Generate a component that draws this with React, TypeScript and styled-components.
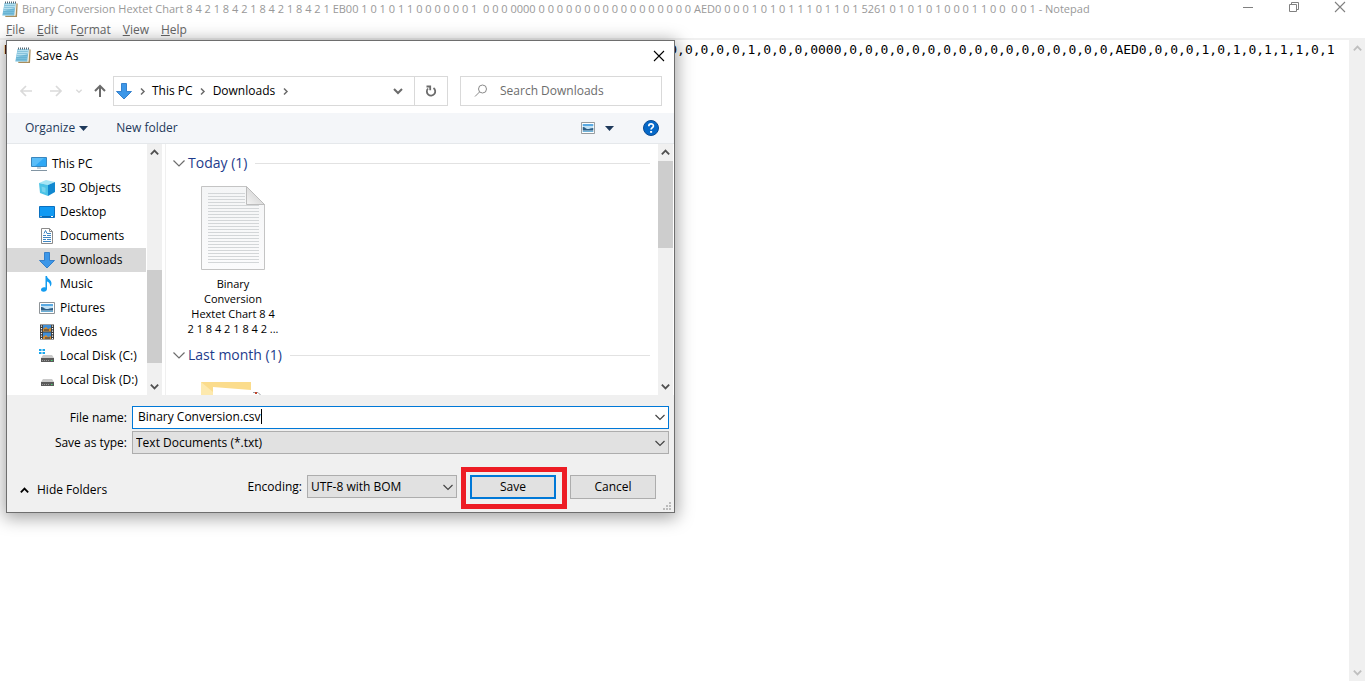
import React from "react";
import styled, { createGlobalStyle, css } from "styled-components";

const Global = createGlobalStyle`
  *, *::before, *::after { box-sizing: border-box; }
  body {
    margin: 0;
    background: #fff;
    color: #000;
    font: 12px/16px "Open Sans", "Noto Sans", sans-serif;
    overflow: hidden;
  }
  button, input, select, textarea { font: inherit; color: inherit; margin: 0; }
  svg { display: block; flex: none; }
`;

/* ---------- Notepad window ---------- */

const NotepadWindow = styled.main`
  position: relative;
  display: flex;
  flex-direction: column;
  height: 100vh;
  background: #fff;
`;

const TitleBar = styled.header`
  display: flex;
  align-items: center;
  height: 20px;
  padding: 0 13px 2px 2px;
  color: #999;
`;

const WindowTitle = styled.h1`
  flex: 1;
  margin: 0 0 0 4px;
  font-size: 11px;
  font-weight: 400;
  line-height: 16px;
  white-space: pre;
  overflow: hidden;
`;

const WindowControls = styled.div`
  display: flex;
  gap: 22px;
  height: 18px;
`;

const PlainButton = styled.button`
  display: flex;
  align-items: center;
  justify-content: center;
  padding: 0;
  border: 0;
  background: none;
`;

const CaptionButton = styled(PlainButton)`
  width: 24px;
  height: 14px;
  color: #808080;
`;

const MenuBar = styled.nav`
  display: flex;
  gap: 12px;
  height: 20px;
  padding: 0 6px;
  color: #666;
  border-bottom: 2px solid #f0f0f0;
`;

const MenuButton = styled(PlainButton)`
  height: 19px;
`;

const EditorRow = styled.section`
  display: flex;
  flex: 1;
  min-height: 0;
`;

const Editor = styled.textarea`
  flex: 1;
  min-width: 0;
  padding: 1px 0 0 4px;
  border: 0;
  outline: 0;
  resize: none;
  overflow: hidden;
  background: #fff;
  white-space: pre;
  font: 13px/18px "DejaVu Sans Mono", monospace;
`;

/* ---------- Scroll bars ---------- */

const Track = styled.div<{ $width: number }>`
  display: flex;
  flex-direction: column;
  flex: none;
  width: ${(p) => p.$width}px;
  background: #f0f0f0;
`;

const ScrollArrow = styled(PlainButton)<{ $dim?: boolean }>`
  height: 17px;
  flex: none;
  color: ${(p) => (p.$dim ? "#bfbfbf" : "#505050")};
`;

const Thumb = styled.div<{ $before: number; $size: number }>`
  flex: none;
  height: ${(p) => p.$size}px;
  margin-top: ${(p) => p.$before}px;
  background: #cdcdcd;
`;

const Spacer = styled.div`
  flex: 1;
`;

/* ---------- Save As dialog ---------- */

const Dialog = styled.section`
  position: absolute;
  left: 6px;
  top: 40px;
  width: 669px;
  display: flex;
  flex-direction: column;
  border: 1px solid #6e6e6e;
  background: #fff;
  box-shadow: 0 3px 16px 2px rgba(0, 0, 0, 0.36);
`;

const DialogTitleBar = styled.header`
  display: flex;
  align-items: center;
  height: 29px;
  padding: 0 9px 0 8px;
`;

const DialogTitle = styled.h2`
  flex: 1;
  margin: 0 0 0 5px;
  font-size: 12px;
  font-weight: 400;
`;

const NavRow = styled.div`
  display: flex;
  align-items: center;
  padding: 6px 12px 7px 5px;
  height: 43px;
`;

const NavButton = styled(PlainButton)<{ $width: number; $dim?: boolean }>`
  width: ${(p) => p.$width}px;
  height: 20px;
  color: ${(p) => (p.$dim ? "#dadada" : "#6b6b6b")};
`;

const AddressBar = styled.div`
  display: flex;
  align-items: center;
  flex: 1;
  height: 30px;
  padding-left: 2px;
  border: 1px solid #d9d9d9;
  color: #6b6b6b;
`;

const Crumb = styled(PlainButton)`
  color: #000;
`;

const CrumbArrow = styled.span`
  display: flex;
  justify-content: center;
  width: 20px;
`;

const Refresh = styled(PlainButton)`
  align-self: stretch;
  width: 33px;
  border-left: 1px solid #d9d9d9;
  color: #6b6b6b;
`;

const SearchBox = styled.label`
  display: flex;
  align-items: center;
  flex: none;
  width: 202px;
  height: 30px;
  margin-left: 12px;
  padding-left: 13px;
  gap: 12px;
  border: 1px solid #d9d9d9;
`;

const SearchInput = styled.input`
  min-width: 0;
  flex: 1;
  padding: 0;
  border: 0;
  outline: 0;
  background: none;
  &::placeholder { color: #6d6d6d; opacity: 1; }
`;

const Toolbar = styled.div`
  display: flex;
  align-items: center;
  height: 31px;
  padding: 0 15px 0 18px;
  border-bottom: 1px solid #e5e8eb;
  background: #f4f6f9;
  color: #1e395b;
`;

const ToolButton = styled(PlainButton)`
  gap: 4px;
  margin-right: 28px;
`;

const ViewButton = styled(PlainButton)`
  gap: 10px;
  margin-right: 29px;
`;

const Browser = styled.div`
  display: flex;
  height: 251px;
  padding-right: 1px;
`;

const Tree = styled.ul`
  flex: none;
  width: 140px;
  margin: 0;
  padding: 8px 1px 0 0;
  list-style: none;
  overflow: hidden;
`;

const TreeItem = styled.li<{ $depth: number; $selected?: boolean }>`
  display: flex;
  align-items: center;
  gap: 5px;
  height: 24px;
  padding-left: ${(p) => 24 + p.$depth * 8}px;
  white-space: nowrap;
  ${(p) => p.$selected && css`background: #d9d9d9;`}
`;

const Files = styled.div`
  flex: 1;
  margin-left: 3px;
  padding: 9px 8px 0 7px;
  border-left: 1px solid #f0f0f0;
  overflow: hidden;
`;

const GroupHeader = styled.h3`
  display: flex;
  align-items: center;
  gap: 3px;
  margin: 0;
  color: #1e3c8c;
  font-size: 14px;
  font-weight: 400;
  line-height: 20px;
  &::after {
    content: "";
    flex: 1;
    height: 1px;
    margin-left: 5px;
    background: #e2e2e2;
  }
`;

const FileTile = styled.figure`
  display: flex;
  flex-direction: column;
  align-items: center;
  gap: 6px;
  width: 94px;
  height: 172px;
  margin: 0 0 0 13px;
  padding-top: 13px;
`;

const FileName = styled.figcaption`
  font-size: 11px;
  line-height: 15px;
  text-align: center;
  white-space: pre;
`;

const FolderTile = styled.div`
  padding: 17px 0 0 28px;
`;

const Form = styled.form`
  display: flex;
  flex-direction: column;
  padding: 11px 5px 0 0;
  height: 117px;
  background: #f0f0f0;
`;

const Field = styled.div`
  display: flex;
  align-items: center;
  margin-bottom: 2px;
`;

const FieldLabel = styled.label`
  width: 125px;
  padding-right: 5px;
  text-align: right;
`;

const NameBox = styled.div`
  display: flex;
  align-items: center;
  flex: 1;
  height: 23px;
  padding: 0 2px 2px 5px;
  border: 1px solid #0078d7;
  background: #fff;
`;

const NameInput = styled.input`
  field-sizing: content;
  padding: 0;
  border: 0;
  outline: 0;
  background: none;
`;

const Caret = styled.span`
  width: 1px;
  height: 15px;
  background: #000;
`;

const SelectBox = styled.div<{ $width?: number }>`
  display: grid;
  align-items: center;
  height: 23px;
  ${(p) => (p.$width ? css`width: ${p.$width}px;` : css`flex: 1;`)}
  & > * { grid-area: 1 / 1; }
  & > svg { justify-self: end; margin-right: 3px; pointer-events: none; }
`;

const Select = styled.select`
  width: 100%;
  height: 23px;
  padding: 0 20px 0 3px;
  border: 1px solid #adadad;
  border-radius: 0;
  background: #e1e1e1;
  appearance: none;
`;

const Actions = styled.div`
  display: flex;
  align-items: flex-start;
  padding: 19px 13px 0 12px;
`;

const HideFolders = styled(PlainButton)`
  gap: 7px;
  margin: 7px auto 0 0;
`;

const EncodingLabel = styled.label`
  margin: 4px 5px 0 0;
`;

const SaveHighlight = styled.span`
  position: relative;
  margin: 0 14px 0 13px;
  &::after {
    content: "";
    position: absolute;
    inset: -8px -11px -10px -9px;
    border: 5px solid #ed1c24;
    pointer-events: none;
  }
`;

const PushButton = styled.button<{ $primary?: boolean }>`
  display: block;
  width: 86px;
  height: 24px;
  padding: 0;
  border: ${(p) => (p.$primary ? "2px solid #0078d7" : "1px solid #adadad")};
  background: #e1e1e1;
`;

const Grip = styled.span`
  position: absolute;
  right: 2px;
  bottom: 1px;
`;

/* ---------- Icons ---------- */

type Dir = "up" | "down" | "left" | "right";
const chevrons: Record<Dir, string> = {
  up: "M2 8 6 4l4 4",
  down: "M2 4l4 4 4-4",
  left: "M8 2 4 6l4 4",
  right: "M4 2l4 4-4 4",
};

const Chevron = ({ dir, size = 12, weight = 2 }: { dir: Dir; size?: number; weight?: number }) => (
  <svg width={size} height={size} viewBox="0 0 12 12" fill="none" stroke="currentColor" strokeWidth={weight}>
    <path d={chevrons[dir]} />
  </svg>
);

const ThinChevron = ({ color = "#444" }: { color?: string }) => (
  <svg width="12" height="12" viewBox="0 0 12 12" fill="none" stroke={color} strokeWidth="1.200">
    <path d="M1.500 4 6 8.500 10.500 4" />
  </svg>
);

const GroupChevron = () => (
  <svg width="12" height="12" viewBox="0 0 12 12" fill="none" stroke="#6d6d6d" strokeWidth="1.200">
    <path d="M.5 3.500 6 9l5.500-5.500" />
  </svg>
);

const CaretDown = () => (
  <svg width="9" height="5" viewBox="0 0 9 5"><path d="M0 0h9L4.500 5z" fill="#1e395b" /></svg>
);

const NotepadIcon = () => (
  <svg width="16" height="17" viewBox="0 0 16 17">
    <path d="M14 2.500h1.700L15 16H3.500l-.5-1.200 10-.3z" fill="#a98d5c" />
    <path d="M13.200 2.500h1.300l-.9 12.300h-1.500z" fill="#f4efe2" />
    <path d="M2.500 2h11.200l-1.400 12.500H.3z" fill="#79bfdc" />
    <path d="M2.800 2.500h10.500l-.5 4.500L1.500 10z" fill="#b5e0ef" />
    <path d="M2.500 4.500h10.300M2.200 6.500h10.300M1.800 8.500h10.500M1.500 10.500h10.500M1.200 12.500h10.500" stroke="#5ba7c8" strokeWidth=".5" />
    <path d="M3.500 .5v2M5.500 .5v2M7.500 .5v2M9.500 .5v2M11.500 .5v2M13.500 .5v2" stroke="#3f5563" strokeWidth=".9" />
  </svg>
);

const DownloadIcon = () => (
  <svg width="16" height="17" viewBox="0 0 16 17">
    <path d="M5.500 .5h5v8h5L8 16 .5 8.500h5z" fill="#3d97e8" stroke="#2a79c8" strokeWidth=".9" />
  </svg>
);

const PcIcon = () => (
  <svg width="16" height="16" viewBox="0 0 16 16">
    <path d="M.5 1.500h15v9H.5z" fill="#2fa8f5" stroke="#3a86bd" />
    <path d="M1 2h12L4 10H1z" fill="#6cc6fa" opacity=".7" />
    <path d="M6 11h4v2H6z" fill="#c5d0d8" />
    <path d="M0 14.500h16" stroke="#8295a3" />
  </svg>
);

const CubeIcon = () => (
  <svg width="16" height="16" viewBox="0 0 16 16">
    <path d="M0 3 7 0l9 2-7 3z" fill="#a6e6f5" />
    <path d="M0 3l9 2v11l-8-3z" fill="#4cc3e6" />
    <path d="M9 5l7-3v10l-7 4z" fill="#1188d0" />
    <path d="M2.500 6.500l4 1.200v5l-3.500-1.200z" fill="#8adcf0" opacity=".7" />
  </svg>
);

const DesktopIcon = () => (
  <svg width="16" height="12" viewBox="0 0 16 12">
    <path d="M.5 .5h15v11H.5z" fill="#119af3" stroke="#0a70c0" />
    <path d="M1 10.500h14" stroke="#0c68b0" />
    <path d="M1.500 10.500h1M12 10.500h2" stroke="#fff" />
  </svg>
);

const DocumentIcon = () => (
  <svg width="16" height="16" viewBox="0 0 16 16">
    <path d="M2.500 .5h8l3 3v12h-11z" fill="#fff" stroke="#8b8b8b" />
    <path d="M10.500 .5v3h3" fill="none" stroke="#8b8b8b" />
    <path d="M5 5.500l1.500-3 1.500 3M8 5.500h4M4 7.500h3M8 7.500h4M4 9.500h8M4 11.500h3M8 11.500h4M4 13.500h8" stroke="#3f87c4" fill="none" />
  </svg>
);

const MusicIcon = () => (
  <svg width="16" height="16" viewBox="0 0 16 16">
    <path d="M6.500 0h1.500c0 3 5 3.500 4.500 8-.2 1-.7 2-1.500 2.500C11.500 7.500 9.500 6 8 5.500V13c0 1.500-1.500 2.800-3.300 2.800S2 14.800 2 13.500s1.500-2.300 3-2.300c.6 0 1.100.1 1.500.3z" fill="#139cf0" />
  </svg>
);

const PictureIcon = ({ width = 16 }: { width?: number }) => (
  <svg width={width} height="12" viewBox="0 0 16 12" preserveAspectRatio="none">
    <path d="M.5 .5h15v11H.5z" fill="#fff" stroke="#8f9498" />
    <path d="M2 2h12v8H2z" fill="#c3e2f5" />
    <path d="M2 2h12v2H2z" fill="#5aaae3" />
    <path d="M2 5c2-.5 3 1.500 5 2s4-1 7-1v2.500H2z" fill="#2f5f86" />
    <path d="M2 9.500h12" stroke="#6bb0d8" />
  </svg>
);

const VideoIcon = () => (
  <svg width="16" height="16" viewBox="0 0 16 16">
    <path d="M1 .5h14v15H1z" fill="#3a3a3a" />
    <path d="M4 1h8v6.500H4zM4 8.500h8V15H4z" fill="#3f8fd8" />
    <path d="M4 5l3-2 2 2 3-1v3.500H4zM4 13l3-2 2 2 3-1v3H4z" fill="#d98c2b" />
    <path d="M5 6h5M6 14h5" stroke="#21374f" />
    <path d="M2.500 1.500V15M13.500 1.500V15" stroke="#fff" strokeWidth="1.200" strokeDasharray="1.200 1.300" />
  </svg>
);

const DiskIcon = ({ system }: { system?: boolean }) => (
  <svg width="16" height="16" viewBox="0 0 16 16">
    {system && <path d="M0 1h2.500v2H0zM3.500 1H6v2H3.500zM0 4h2.500v2H0zM3.500 4H6v2H3.500z" fill="#1aa7ee" />}
    <path d="M4 7h9l2 3H2z" fill="#c9c9c9" />
    <path d="M2 10h13v4H2z" fill="#5a5a5a" />
    <path d="M3 12.500h8" stroke="#9a9a9a" strokeDasharray="1 1" />
    <path d="M12 12.500h1.500" stroke="#46d36d" />
  </svg>
);

const HelpIcon = () => (
  <svg width="16" height="16" viewBox="0 0 16 16">
    <circle cx="8" cy="8" r="7.500" fill="#0568c8" stroke="#0b4b92" />
    <path d="M5.800 6.200c0-3 4.600-2.900 4.600-.3 0 1.700-2.300 1.700-2.300 3.700" fill="none" stroke="#fff" strokeWidth="1.700" />
    <path d="M7.100 11h2v1.800h-2z" fill="#fff" />
  </svg>
);

const TextFileIcon = () => (
  <svg width="64" height="84" viewBox="0 0 64 84">
    <defs>
      <linearGradient id="page" x1="0" y1="0" x2="0" y2="1">
        <stop offset="0" stopColor="#f4f5f6" />
        <stop offset="1" stopColor="#fbfbfc" />
      </linearGradient>
      <linearGradient id="fold" x1="0" y1="1" x2="1" y2="0">
        <stop offset="0" stopColor="#f4f4f4" />
        <stop offset="1" stopColor="#c6c6c6" />
      </linearGradient>
    </defs>
    <path d="M.5 .5h45l18 18v65H.5z" fill="url(#page)" stroke="#c4c4c4" />
    <path d="M45.500 .5v18h18z" fill="url(#fold)" stroke="#bdbdbd" />
    {Array.from({ length: 24 }, (_, i) => (
      <path key={i} d={`M7 ${7.5 + i * 3}H${i < 4 ? 44 : 58}`} stroke="#d3d6d8" />
    ))}
  </svg>
);

const FolderIcon = () => (
  <svg width="64" height="14" viewBox="0 0 64 14">
    <path d="M0 0h50v14H0z" fill="#fbdc8c" />
    <path d="M0 0l12 10v4H0z" fill="#fde9ae" />
    <path d="M12 5l38 3v6H12z" fill="#fff" />
    <path d="M50 8l8 3v3h-8z" fill="#fff" />
    <path d="M52 10.500h5l3 3" fill="none" stroke="#9aa0a6" />
    <path d="M54 10h2v2h-2z" fill="#c2442c" />
    <path d="M36 14l8-1 8 1z" fill="#fbdc8c" />
  </svg>
);

const arrowPaths = { left: "M13 7H2M7 2 2 7l5 5", right: "M1 7h11M7 2l5 5-5 5", up: "M7 13V2M2 7l5-5 5 5" };
const Arrow = ({ dir }: { dir: keyof typeof arrowPaths }) => (
  <svg width="14" height="14" viewBox="0 0 14 14" fill="none" stroke="currentColor" strokeWidth={dir === "up" ? 2 : 1.7}>
    <path d={arrowPaths[dir]} />
  </svg>
);

const CloseIcon = () => (
  <svg width="12" height="12" viewBox="0 0 12 12" stroke="currentColor" strokeWidth="1.100"><path d="M1 1l10 10M11 1 1 11" /></svg>
);

/* ---------- Data ---------- */

const titleText =
  "Binary Conversion Hextet Chart 8 4 2 1 8 4 2 1 8 4 2 1 8 4 2 1 EB00 1 0 1 0 1 1 0 0 0 0 0 0 1  0 0 0 0000 " +
  "0 ".repeat(17) +
  "AED0 0 0 0 1 0 1 0 1 1 1 0 1 1 0 1 5261 0 1 0 1 0 1 0 0 0 1 1 0 0  0 0 1 - Notepad";

const editorText =
  "Binary Conversion Hextet Chart,,,," +
  "8,4,2,1,".repeat(4) +
  "EB00,1,0,1,0,1,1,0,0,0,0,0,0,1,0,0,0,0000," +
  "0,".repeat(17) +
  "AED0,0,0,0,1,0,1,0,1,1,1,0,1";

const menus = ["File", "Edit", "Format", "View", "Help"];
const accessKey: Record<string, number> = { File: 0, Edit: 0, Format: 1, View: 0, Help: 0 };

const places: { name: string; icon: React.ReactNode; depth: number; selected?: boolean }[] = [
  { name: "This PC", icon: <PcIcon />, depth: 0 },
  { name: "3D Objects", icon: <CubeIcon />, depth: 1 },
  { name: "Desktop", icon: <DesktopIcon />, depth: 1 },
  { name: "Documents", icon: <DocumentIcon />, depth: 1 },
  { name: "Downloads", icon: <DownloadIcon />, depth: 1, selected: true },
  { name: "Music", icon: <MusicIcon />, depth: 1 },
  { name: "Pictures", icon: <PictureIcon />, depth: 1 },
  { name: "Videos", icon: <VideoIcon />, depth: 1 },
  { name: "Local Disk (C:)", icon: <DiskIcon system />, depth: 1 },
  { name: "Local Disk (D:)", icon: <DiskIcon />, depth: 1 },
];

const ScrollBar = ({ width, before = 0, size = 0, dim }: { width: number; before?: number; size?: number; dim?: boolean }) => (
  <Track $width={width}>
    <ScrollArrow type="button" aria-label="Scroll up" $dim={dim}><Chevron dir="up" size={11} /></ScrollArrow>
    {size > 0 && <Thumb $before={before} $size={size} />}
    <Spacer />
    <ScrollArrow type="button" aria-label="Scroll down" $dim={dim}><Chevron dir="down" size={11} /></ScrollArrow>
  </Track>
);

export default function App() {
  const [fileName, setFileName] = React.useState("Binary Conversion.csv");
  return (
    <NotepadWindow>
      <Global />
      <TitleBar>
        <NotepadIcon />
        <WindowTitle>{titleText}</WindowTitle>
        <WindowControls>
          <CaptionButton aria-label="Minimize">
            <svg width="10" height="10" viewBox="0 0 10 10" stroke="currentColor"><path d="M0 5.500h10" /></svg>
          </CaptionButton>
          <CaptionButton aria-label="Restore">
            <svg width="10" height="10" viewBox="0 0 10 10" fill="none" stroke="currentColor">
              <path d="M.5 2.500h7v7h-7zM2.500 2.500v-2h7v7h-2" />
            </svg>
          </CaptionButton>
          <CaptionButton aria-label="Close"><CloseIcon /></CaptionButton>
        </WindowControls>
      </TitleBar>
      <MenuBar>
        {menus.map((m) => {
          const k = accessKey[m];
          return (
            <MenuButton key={m}>
              <span>{m.slice(0, k)}<u>{m[k]}</u>{m.slice(k + 1)}</span>
            </MenuButton>
          );
        })}
      </MenuBar>
      <EditorRow>
        <Editor aria-label="Text editor" spellCheck={false} defaultValue={editorText} />
        <ScrollBar width={16} dim />
      </EditorRow>

      <Dialog role="dialog" aria-label="Save As">
        <DialogTitleBar>
          <NotepadIcon />
          <DialogTitle>Save As</DialogTitle>
          <PlainButton aria-label="Close"><CloseIcon /></PlainButton>
        </DialogTitleBar>

        <NavRow>
          <NavButton aria-label="Back" $width={28} $dim><Arrow dir="left" /></NavButton>
          <NavButton aria-label="Forward" $width={32} $dim><Arrow dir="right" /></NavButton>
          <NavButton aria-label="Recent locations" $width={14} $dim><Chevron dir="down" size={8} /></NavButton>
          <NavButton aria-label="Up" $width={27}><Arrow dir="up" /></NavButton>
          <AddressBar>
            <DownloadIcon />
            <CrumbArrow><Chevron dir="right" size={9} /></CrumbArrow>
            <Crumb>This PC</Crumb>
            <CrumbArrow><Chevron dir="right" size={9} /></CrumbArrow>
            <Crumb>Downloads</Crumb>
            <CrumbArrow><Chevron dir="right" size={9} /></CrumbArrow>
            <Spacer />
            <NavButton aria-label="Previous locations" $width={32}><Chevron dir="down" /></NavButton>
            <Refresh aria-label="Refresh">
              <svg width="12" height="12" viewBox="0 0 12 12" fill="none" stroke="currentColor" strokeWidth="1.800">
                <path d="M8.500 3A4.200 4.200 0 1 1 3 3.500M1.500 1.500h3.700v3.700" />
              </svg>
            </Refresh>
          </AddressBar>
          <SearchBox>
            <svg width="14" height="14" viewBox="0 0 14 14" fill="none" stroke="#8a8a8a">
              <circle cx="8.500" cy="5" r="4" /><path d="M5.500 8 1 12.500" />
            </svg>
            <SearchInput type="text" aria-label="Search Downloads" placeholder="Search Downloads" />
          </SearchBox>
        </NavRow>

        <Toolbar>
          <ToolButton>Organize <CaretDown /></ToolButton>
          <ToolButton>New folder</ToolButton>
          <Spacer />
          <ViewButton aria-label="Change view"><PictureIcon width={14} /><CaretDown /></ViewButton>
          <PlainButton aria-label="Help"><HelpIcon /></PlainButton>
        </Toolbar>

        <Browser>
          <Tree>
            {places.map((p) => (
              <TreeItem key={p.name} $depth={p.depth} $selected={p.selected}>
                {p.icon}
                {p.name}
              </TreeItem>
            ))}
          </Tree>
          <ScrollBar width={15} before={109} size={93} />
          <Files>
            <GroupHeader><GroupChevron />Today (1)</GroupHeader>
            <FileTile>
              <TextFileIcon />
              <FileName>{"Binary\nConversion\nHextet Chart 8 4\n2 1 8 4 2 1 8 4 2 ..."}</FileName>
            </FileTile>
            <GroupHeader><GroupChevron />Last month (1)</GroupHeader>
            <FolderTile><FolderIcon /></FolderTile>
          </Files>
          <ScrollBar width={15} size={87} />
        </Browser>

        <Form onSubmit={(e) => e.preventDefault()}>
          <Field>
            <FieldLabel htmlFor="file-name">File name:</FieldLabel>
            <NameBox>
              <NameInput id="file-name" type="text" value={fileName} onChange={(e) => setFileName(e.target.value)} />
              <Caret />
              <Spacer />
              <ThinChevron />
            </NameBox>
          </Field>
          <Field>
            <FieldLabel htmlFor="file-type">Save as type:</FieldLabel>
            <SelectBox>
              <Select id="file-type"><option>Text Documents (*.txt)</option></Select>
              <ThinChevron />
            </SelectBox>
          </Field>
          <Actions>
            <HideFolders type="button"><Chevron dir="up" size={11} />Hide Folders</HideFolders>
            <EncodingLabel htmlFor="encoding">Encoding:</EncodingLabel>
            <SelectBox $width={150}>
              <Select id="encoding"><option>UTF-8 with BOM</option></Select>
              <ThinChevron />
            </SelectBox>
            <SaveHighlight><PushButton type="submit" $primary>Save</PushButton></SaveHighlight>
            <PushButton type="button">Cancel</PushButton>
          </Actions>
        </Form>
        <Grip>
          <svg width="9" height="9" viewBox="0 0 9 9" fill="#bcbcbc">
            <path d="M6 0h2v2H6zM3 3h2v2H3zM6 3h2v2H6zM0 6h2v2H0zM3 6h2v2H3zM6 6h2v2H6z" />
          </svg>
        </Grip>
      </Dialog>
    </NotepadWindow>
  );
}
